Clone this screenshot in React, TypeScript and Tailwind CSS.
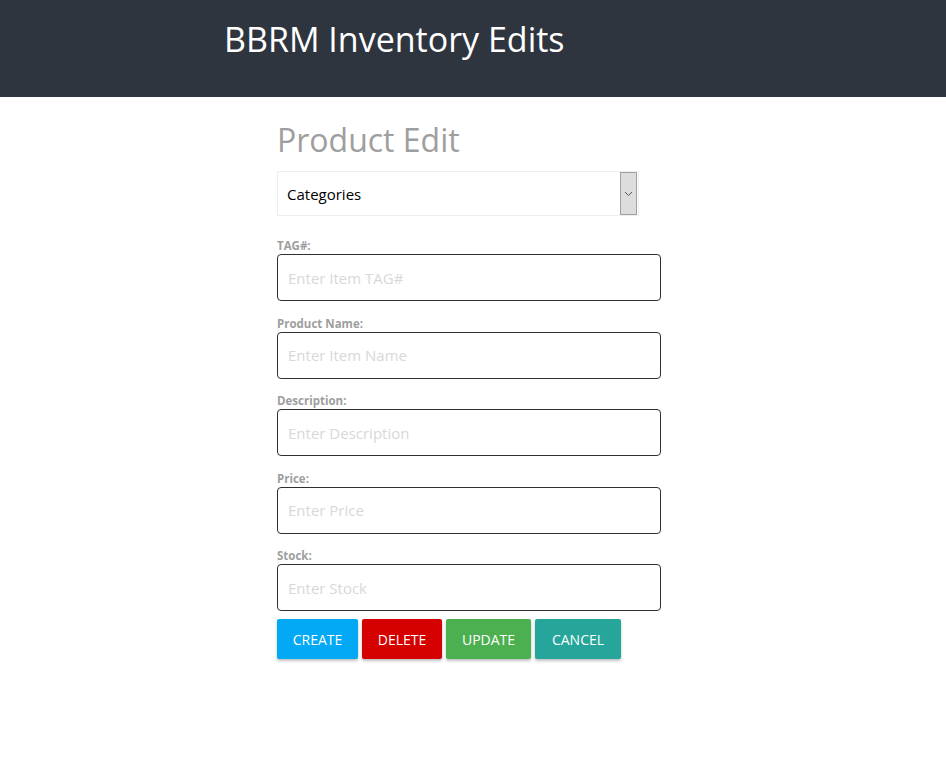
const fields = [
  { label: "TAG#:", placeholder: "Enter Item TAG#" },
  { label: "Product Name:", placeholder: "Enter Item Name" },
  { label: "Description:", placeholder: "Enter Description" },
  { label: "Price:", placeholder: "Enter Price" },
  { label: "Stock:", placeholder: "Enter Stock" },
];

const buttons = [
  { text: "Create", cls: "w-[81px] bg-[#03a9f4]" },
  { text: "Delete", cls: "w-[80px] bg-[#d50000]" },
  { text: "Update", cls: "w-[85px] bg-[#4caf50]" },
  { text: "Cancel", cls: "w-[86px] bg-[#26a69a]" },
];

export default function App() {
  return (
    <div className="min-h-screen bg-white font-['Open_Sans',sans-serif]">
      <header className="h-[97px] bg-[#2f353f] pl-[224px] pt-[14px]">
        <h1 className="text-[34px] leading-[50px] text-white">BBRM Inventory Edits</h1>
      </header>
      <main className="ml-[277px] w-[384px] pt-[20px]">
        <h2 className="text-[32px] leading-[46px] text-[#9e9e9e]">Product Edit</h2>
        <div className="mt-[8px] flex h-[45px] w-[362px] items-center border border-[#eeeeee] pl-[9px] pr-px">
          <span className="flex-1 text-[15px] leading-[20px] pt-px text-black">Categories</span>
          <div className="flex h-[43px] w-[17px] items-center justify-center border border-[#a0a0a0] bg-[#dddddd]">
            <svg width="9" height="6" viewBox="0 0 9 6" fill="none">
              <path d="M1 1l3.5 3.5L8 1" stroke="#555" strokeWidth="1" />
            </svg>
          </div>
        </div>
        <div className="mt-[21px] flex flex-col gap-[13.5px]">
          {fields.map((f) => (
            <div key={f.label} className="flex flex-col">
              <label className="h-[17px] text-[11.5px] font-bold leading-[17px] text-[#9e9e9e]">
                {f.label}
              </label>
              <input
                placeholder={f.placeholder}
                className="h-[47px] rounded-[4px] border border-[#303030] px-[10px] text-[15px] outline-none placeholder:text-[#d8d8d8]"
              />
            </div>
          ))}
        </div>
        <div className="mt-[8px] flex gap-[4px]">
          {buttons.map((b) => (
            <button
              key={b.text}
              className={`h-[40px] rounded-[2px] text-[14px] uppercase text-white shadow-[0_2px_3px_rgba(0,0,0,0.25)] ${b.cls}`}
            >
              {b.text}
            </button>
          ))}
        </div>
      </main>
    </div>
  );
}
